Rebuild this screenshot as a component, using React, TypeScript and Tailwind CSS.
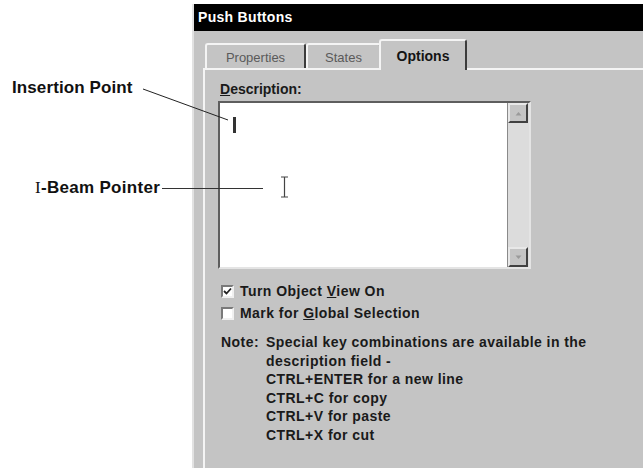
import React from 'react';

const sans = { fontFamily: '"Liberation Sans", Arial, sans-serif' };

const Tab: React.FC<{ label: string; active?: boolean; width: string }> = ({ label, active, width }) => (
  <div
    className={`${width} flex items-center justify-center border-t-2 border-l-2 border-r-2 border-t-[#f4f4f4] border-l-[#f4f4f4] border-r-[#3c3c3c] rounded-t-[3px] bg-[#c4c4c4] ${
      active
        ? 'h-[31px] -mb-[2px] relative z-10 font-bold text-[14px] text-[#141414] -ml-[2px] pt-[2px]'
        : 'h-[25px] pt-[3px] text-[13px] text-[#5a5a5a]'
    }`}
  >
    {label}
  </div>
);

const Checkbox: React.FC<{ checked?: boolean }> = ({ checked }) => (
  <div className="w-[13px] h-[13px] border-2 border-t-[#7a7a7a] border-l-[#7a7a7a] border-b-[#f0f0f0] border-r-[#f0f0f0] bg-white flex items-center justify-center">
    {checked && (
      <svg width="9" height="9" viewBox="0 0 9 9">
        <path d="M1 4 L3.5 6.5 L8 1.5" fill="none" stroke="#222" strokeWidth="1.8" />
      </svg>
    )}
  </div>
);

const ScrollButton: React.FC<{ up?: boolean }> = ({ up }) => (
  <div className="w-[20px] h-[20px] bg-[#c4c4c4] border-2 border-t-[#e8e8e8] border-l-[#e8e8e8] border-b-[#404040] border-r-[#404040] flex items-center justify-center">
    <svg width="7" height="5" viewBox="0 0 7 5">
      <path d={up ? 'M0.5 4.5 L3.5 1 L6.5 4.5 Z' : 'M0.5 0.5 L3.5 4 L6.5 0.5 Z'} fill="#9a9a9a" />
    </svg>
  </div>
);

export default function App() {
  return (
    <div className="relative w-[643px] h-[468px] bg-white overflow-hidden flex" style={sans}>
      <div className="w-[192px] shrink-0 text-[17px] font-bold text-[#111]">
        <div className="mt-[78px] pl-[12px] leading-[20px] tracking-[0.1px]">Insertion Point</div>
        <div className="mt-[80px] pl-[35px] leading-[20px] tracking-[0.3px]">
          <span style={{ fontFamily: '"Liberation Serif", "Times New Roman", serif' }} className="font-normal">I</span>-Beam Pointer
        </div>
      </div>

      <div className="flex-1 mt-[4px] flex flex-col border-l-2 border-[#e2e2e2]">
        <div className="h-[27px] bg-black flex items-center pl-[4px] text-white font-bold text-[14px] tracking-[0.3px]">Push Buttons</div>
        <div className="flex-1 bg-[#c4c4c4] pt-[8px] pl-[9px] flex flex-col">
          <div className="flex items-end pl-[2px]">
            <Tab label="Properties" width="w-[101px]" />
            <Tab label="States" width="w-[75px]" />
            <Tab label="Options" width="w-[88px]" active />
          </div>
          <div className="flex-1 border-t-2 border-l-2 border-[#f4f4f4] pl-[13px] pt-[11px] text-[14px] font-bold text-[#1a1a1a] tracking-[0.45px]">
            <div className="ml-[2px] leading-[17px] tracking-normal">
              <span className="underline">D</span>escription:
            </div>
            <div className="mt-[3px] w-[313px] h-[168px] border-2 border-t-[#5e5e5e] border-l-[#5e5e5e] border-b-[#e4e4e4] border-r-[#e4e4e4] flex">
              <div className="relative flex-1 bg-white pl-[13px] pt-[14px]">
                <div className="w-[3px] h-[16px] bg-[#333]" />
                <svg className="absolute left-[59px] top-[73px]" width="11" height="22" viewBox="0 0 11 22">
                  <path d="M5.5 1 V21 M2 1 H9 M2 21 H9" fill="none" stroke="#444" strokeWidth="1.2" />
                </svg>
              </div>
              <div className="w-[22px] bg-[#dcdcdc] flex flex-col justify-between border-l border-[#8a8a8a]">
                <ScrollButton up />
                <ScrollButton />
              </div>
            </div>

            <div className="mt-[11px] h-[22px] flex items-center pl-[3px] gap-[6px]">
              <Checkbox checked />
              <span>
                Turn Object <span className="underline">V</span>iew On
              </span>
            </div>
            <div className="h-[22px] flex items-center pl-[3px] gap-[6px]">
              <Checkbox />
              <span>
                Mark for <span className="underline">G</span>lobal Selection
              </span>
            </div>

            <div className="mt-[9px] pl-[3px] flex leading-[18.5px]">
              <div className="w-[45px] shrink-0">Note:</div>
              <div>
                <div>Special key combinations are available in the</div>
                <div>description field -</div>
                <div>CTRL+ENTER for a new line</div>
                <div>CTRL+C for copy</div>
                <div>CTRL+V for paste</div>
                <div>CTRL+X for cut</div>
              </div>
            </div>
          </div>
        </div>
      </div>

      <svg className="absolute inset-0 pointer-events-none" width="643" height="468">
        <line x1="143" y1="89" x2="228" y2="120" stroke="#222" strokeWidth="1" />
        <line x1="162" y1="188.5" x2="263" y2="188.5" stroke="#333" strokeWidth="1" />
      </svg>
    </div>
  );
}
